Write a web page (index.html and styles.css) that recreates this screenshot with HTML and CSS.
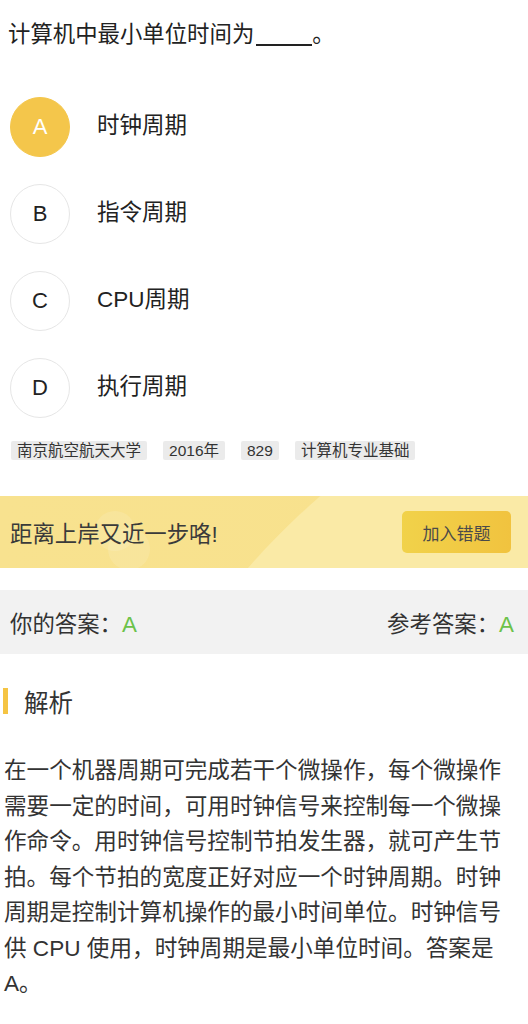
FILE: index.html
```html
<!DOCTYPE html>
<html lang="zh-CN">
<head>
<meta charset="utf-8">
<title>题目</title>
<link rel="stylesheet" href="styles.css">
</head>
<body>
<div class="page">
  <div class="question">计算机中最小单位时间为<span class="blank"></span>。</div>

  <div class="options">
    <div class="option">
      <div class="opt-circle selected">A</div>
      <div class="opt-text">时钟周期</div>
    </div>
    <div class="option">
      <div class="opt-circle">B</div>
      <div class="opt-text">指令周期</div>
    </div>
    <div class="option">
      <div class="opt-circle">C</div>
      <div class="opt-text">CPU周期</div>
    </div>
    <div class="option">
      <div class="opt-circle">D</div>
      <div class="opt-text">执行周期</div>
    </div>
  </div>

  <div class="tags">
    <span class="tag">南京航空航天大学</span>
    <span class="tag">2016年</span>
    <span class="tag">829</span>
    <span class="tag">计算机专业基础</span>
  </div>

  <div class="banner">
    <span class="deco deco-1"></span>
    <span class="deco deco-2"></span>
    <div class="banner-text">距离上岸又近一步咯!</div>
    <div class="banner-btn">加入错题</div>
  </div>

  <div class="answer-row">
    <div class="answer">你的答案：<span class="green">A</span></div>
    <div class="answer">参考答案：<span class="green">A</span></div>
  </div>

  <div class="section-title">
    <span class="bar"></span>
    <span class="section-text">解析</span>
  </div>

  <div class="analysis">在一个机器周期可完成若干个微操作，每个微操作需要一定的时间，可用时钟信号来控制每一个微操作命令。用时钟信号控制节拍发生器，就可产生节拍。每个节拍的宽度正好对应一个时钟周期。时钟周期是控制计算机操作的最小时间单位。时钟信号供 CPU 使用，时钟周期是最小单位时间。答案是A。</div>
</div>
</body>
</html>
```

FILE: styles.css
```css
* { box-sizing: border-box; }
html, body {
  margin: 0;
  padding: 0;
  background: #ffffff;
}
body {
  font-family: "Liberation Sans", "Noto Sans CJK SC", sans-serif;
  color: #222222;
}
.page {
  width: 528px;
}
.question {
  padding: 20px 8px 0 8px;
  font-size: 22.4px;
  line-height: 30px;
  color: #222;
}
.blank {
  display: inline-block;
  width: 56px;
  height: 22px;
  border-bottom: 2px solid #222;
  vertical-align: -4px;
  margin-left: 2px;
}
.options {
  margin-top: 47px;
  padding-left: 10px;
  display: flex;
  flex-direction: column;
  gap: 27px;
}
.option {
  display: flex;
  align-items: center;
  gap: 27px;
}
.opt-circle {
  width: 60px;
  height: 60px;
  border-radius: 50%;
  border: 1px solid #e6e6e6;
  display: flex;
  align-items: center;
  justify-content: center;
  font-size: 22px;
  color: #222;
}
.opt-circle.selected {
  background: #f4c64b;
  border-color: #f4c64b;
  color: #ffffff;
}
.opt-text {
  font-size: 22.5px;
  line-height: 26px;
  margin-top: -3px;
  color: #222;
}
.tags {
  margin-top: 23px;
  padding-left: 11px;
  display: flex;
  gap: 16px;
}
.tag {
  height: 19px;
  line-height: 19px;
  padding: 0 6px;
  font-size: 15.5px;
  background: #ebebeb;
  border-radius: 2px;
  color: #333;
}
.banner {
  position: relative;
  margin-top: 36px;
  height: 72px;
  overflow: hidden;
  display: flex;
  align-items: center;
  justify-content: space-between;
  padding: 0 17px 0 10px;
  background:
    radial-gradient(circle at 800px 555px, #faeaa6 733px, rgba(250,234,166,0) 734px),
    linear-gradient(90deg, #f8e28f, #f8e18c);
}
.deco {
  position: absolute;
  border-radius: 50%;
  background: rgba(255,255,255,0.12);
}
.deco-1 {
  left: 95px;
  top: 15px;
  width: 40px;
  height: 40px;
}
.deco-2 {
  left: 108px;
  top: 32px;
  width: 42px;
  height: 42px;
}
.banner-text {
  position: relative;
  font-size: 22.4px;
  color: #3a3a3a;
}
.banner-btn {
  position: relative;
  width: 109px;
  height: 42px;
  border-radius: 5px;
  background: linear-gradient(90deg, #f1d24a, #f1c33f);
  display: flex;
  align-items: center;
  justify-content: center;
  font-size: 17px;
  color: #4a4a4a;
}
.answer-row {
  margin-top: 22px;
  height: 64px;
  background: #f2f2f2;
  display: flex;
  align-items: center;
  justify-content: space-between;
  padding: 0 14px 0 10px;
}
.answer {
  font-size: 22.4px;
  color: #333;
}
.green {
  color: #6cc24a;
}
.section-title {
  margin-top: 34px;
  display: flex;
  align-items: center;
  height: 26px;
  padding-left: 3px;
}
.bar {
  width: 5px;
  height: 26px;
  background: #f5c443;
}
.section-text {
  margin-left: 16px;
  font-size: 24.5px;
  color: #333;
}
.analysis {
  margin-top: 39px;
  padding: 0 14px 0 4px;
  font-size: 22.6px;
  line-height: 35.5px;
  color: #333;
}
```
